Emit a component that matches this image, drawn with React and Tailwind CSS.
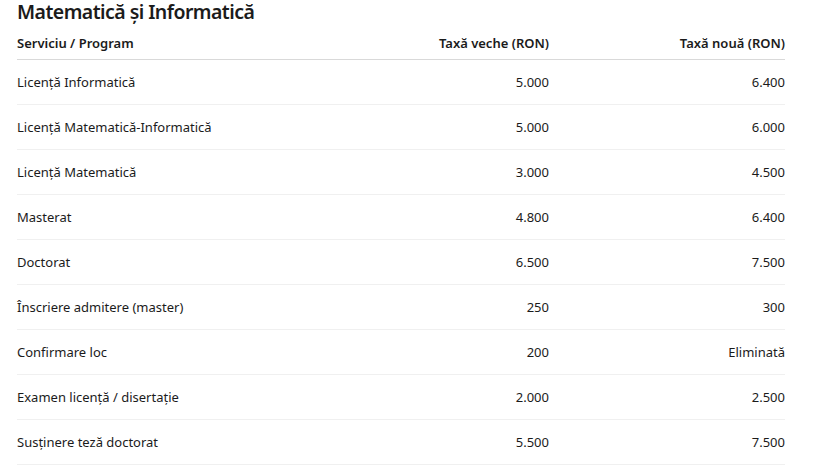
import React from "react";

const rows = [
  ["Licență Informatică", "5.000", "6.400"],
  ["Licență Matematică-Informatică", "5.000", "6.000"],
  ["Licență Matematică", "3.000", "4.500"],
  ["Masterat", "4.800", "6.400"],
  ["Doctorat", "6.500", "7.500"],
  ["Înscriere admitere (master)", "250", "300"],
  ["Confirmare loc", "200", "Eliminată"],
  ["Examen licență / disertație", "2.000", "2.500"],
  ["Susținere teză doctorat", "5.500", "7.500"],
];

function App() {
  return (
    <div
      className="min-h-screen bg-white text-[#1b1b1b] px-[17px]"
      style={{ fontFamily: '"Noto Sans", "Open Sans", sans-serif' }}
    >
      <h2 className="text-[19.5px] leading-[24px] font-semibold tracking-[-0.55px] h-[28px]">
        Matematică și Informatică
      </h2>
      <div className="w-[768px]">
        <div className="grid grid-cols-[296px_236px_236px] h-[32px] items-center border-b border-[#d9d9d9] text-[13px] font-semibold">
          <div>Serviciu / Program</div>
          <div className="text-right">Taxă veche (RON)</div>
          <div className="text-right">Taxă nouă (RON)</div>
        </div>
        {rows.map((r, i) => (
          <div
            key={i}
            className="grid grid-cols-[296px_236px_236px] h-[45px] pt-[2px] items-center border-b border-[#f0f0f0] text-[13px]"
          >
            <div>{r[0]}</div>
            <div className="text-right">{r[1]}</div>
            <div className="text-right">{r[2]}</div>
          </div>
        ))}
      </div>
    </div>
  );
}

export default App;
